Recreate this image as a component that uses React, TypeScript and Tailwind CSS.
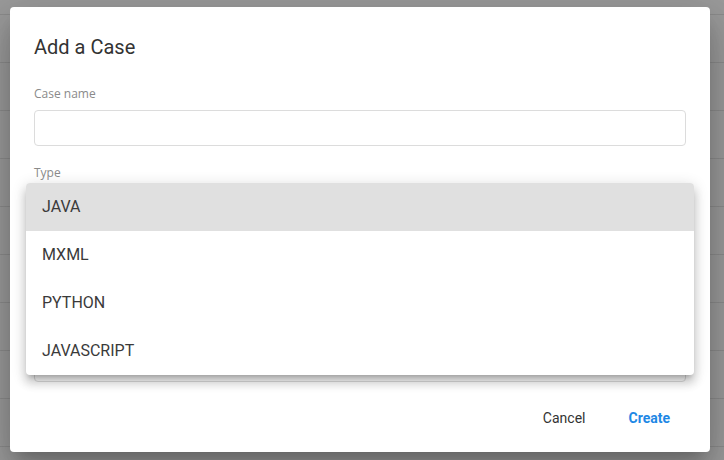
import React from "react";

const types = ["JAVA", "MXML", "PYTHON", "JAVASCRIPT"];

export default function App() {
  return (
    <div className="relative w-[724px] h-[460px] overflow-hidden bg-[#9b9b9b] font-['Roboto',sans-serif]">
      {/* dimmed page behind the dialog */}
      <div className="h-[15px] border-b border-[#8c8c8c]" />
      {Array.from({ length: 10 }).map((_, i) => (
        <div key={i} className="h-[48px] border-b border-[#8c8c8c]" />
      ))}

      <div className="absolute left-[10px] top-[7px] w-[700px] h-[445px] bg-white rounded-[4px] shadow-[0_11px_15px_-7px_rgba(0,0,0,0.2),0_24px_38px_3px_rgba(0,0,0,0.14),0_9px_46px_8px_rgba(0,0,0,0.12)] flex flex-col">
        <div className="relative px-6 pt-[27px] flex-1">
          <h2 className="text-[20px] leading-[26px] text-[#333]">Add a Case</h2>

          <label className="block mt-[26px] text-[12px] leading-[16px] text-[#8a8a8a] font-['Open_Sans',sans-serif]">
            Case name
          </label>
          <div className="mt-[8px] h-[36px] rounded-[4px] border border-[#dcdcdc]" />

          <label className="block mt-[19px] text-[12px] leading-[16px] text-[#8a8a8a] font-['Open_Sans',sans-serif]">
            Type
          </label>
          <div className="mt-[9px] h-[36px] rounded-[4px] border border-[#dcdcdc]" />
          {/* description field, hidden under the open menu */}
          <div className="mt-[44px] h-[112px] rounded-[4px] border border-[#dcdcdc]" />

          {/* open select menu */}
          <ul className="absolute left-[16px] right-[16px] top-[176px] bg-white rounded-[4px] overflow-hidden shadow-[0_5px_5px_-3px_rgba(0,0,0,0.2),0_8px_10px_1px_rgba(0,0,0,0.14),0_3px_14px_2px_rgba(0,0,0,0.12)]">
            {types.map((t, i) => (
              <li
                key={t}
                className={`h-[48px] flex items-center px-4 text-[16px] text-[#3a3a3a] ${
                  i === 0 ? "bg-[#e0e0e0]" : ""
                }`}
              >
                {t}
              </li>
            ))}
          </ul>
        </div>

        <div className="flex justify-end gap-[11px] px-6 pb-4">
          <button className="h-[36px] px-4 text-[14px] text-[#333]">Cancel</button>
          <button className="h-[36px] px-4 text-[14px] font-bold text-[#1e88e5]">Create</button>
        </div>
      </div>
    </div>
  );
}
